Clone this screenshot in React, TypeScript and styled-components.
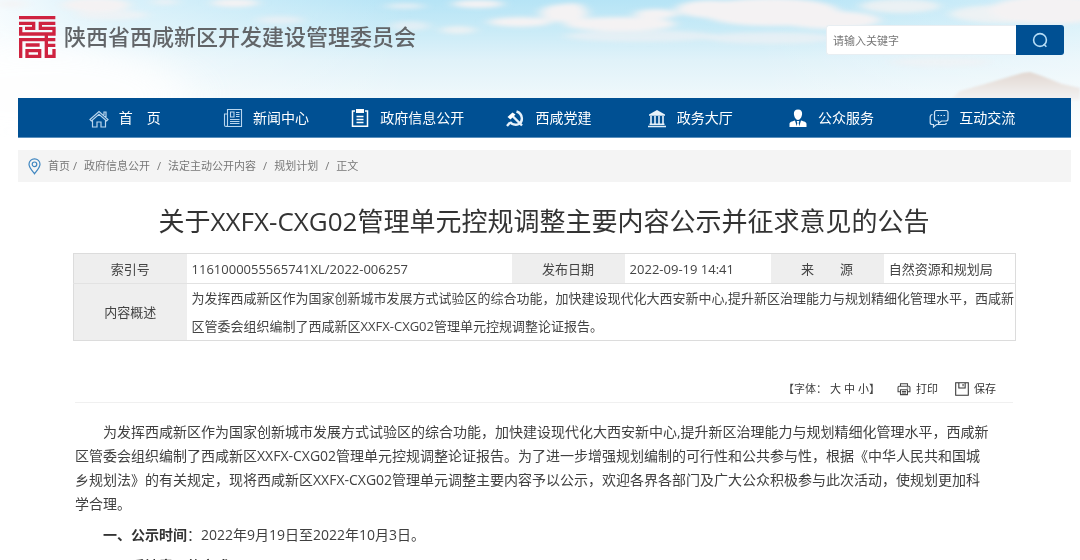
import React from 'react';
import styled, { createGlobalStyle } from 'styled-components';

const Global = createGlobalStyle`
  * { box-sizing: border-box; }
  body {
    margin: 0;
    background: #fff;
    color: #444;
    font-family: "Open Sans", "Noto Sans CJK SC", sans-serif;
  }
  a { color: inherit; text-decoration: none; }
  button { font-family: inherit; cursor: pointer; }
`;

const Page = styled.div`
  position: relative;
`;

const Sky = styled.svg`
  position: absolute;
  inset: 0 0 auto 0;
  width: 100%;
  height: 150px;
  z-index: -1;
`;

const Header = styled.header`
  display: flex;
  justify-content: space-between;
  align-items: flex-start;
  height: 98px;
  padding: 15px 16px 0 18px;
`;

const Brand = styled.a`
  display: flex;
  align-items: flex-start;
  gap: 8px;
`;

const BrandName = styled.span`
  padding-top: 5px;
  font-size: 22px;
  line-height: 32px;
  font-weight: 500;
  color: #626568;
`;

const Search = styled.form`
  display: flex;
  width: 238px;
  height: 30px;
  margin-top: 10px;
`;

const SearchInput = styled.input`
  flex: 1;
  min-width: 0;
  padding: 0 6px;
  border: 1px solid #e8eef2;
  border-right: 0;
  border-radius: 3px 0 0 3px;
  background: #fff;
  font-family: inherit;
  font-size: 11px;
  &::placeholder { color: #777; opacity: 1; }
`;

const SearchButton = styled.button`
  display: flex;
  align-items: center;
  justify-content: center;
  width: 48px;
  padding: 0;
  border: 0;
  border-radius: 0 3px 3px 0;
  background: #005093;
`;

const Nav = styled.nav`
  display: flex;
  height: 40px;
  margin: 0 9px 0 18px;
  padding: 0 28px 0 36px;
  background: #005093;
  border-bottom: 1px solid #5b90bd;
`;

const NavLink = styled.a`
  flex: 1;
  display: flex;
  align-items: center;
  justify-content: center;
  gap: 10px;
  color: #fff;
  font-size: 14px;
  line-height: 20px;
  white-space: nowrap;
`;

const Crumbs = styled.nav`
  display: flex;
  align-items: center;
  height: 32px;
  margin: 12px 9px 0 18px;
  padding: 0 10px;
  background: #f4f4f4;
  color: #777;
  font-size: 11px;
  line-height: 20px;
`;

const CrumbLink = styled.a`
  margin-left: 7px;
`;

const Slash = styled.span<{ $tight?: boolean }>`
  margin-left: ${(p) => (p.$tight ? 3 : 7)}px;
`;

const Article = styled.main`
  padding: 0 67px 0 75px;
`;

const Title = styled.h1`
  margin: 20px 0 13px;
  color: #333;
  font-size: 26px;
  line-height: 38px;
  font-weight: 400;
  text-align: center;
`;

const MetaWrap = styled.div`
  margin: 0 -3px 0 -2px;
`;

const Meta = styled.table`
  width: 100%;
  table-layout: fixed;
  border-collapse: collapse;
  border: 1px solid #dcdcdc;
  font-size: 13px;
  line-height: 28px;
  tr:first-child { height: 30px; }
  tr + tr { border-top: 1px solid #e2e2e2; }
`;

const Label = styled.th`
  padding: 0;
  background: #eee;
  font-weight: 400;
  text-align: center;
`;

const Value = styled.td`
  padding: 0 0 0 5px;
  white-space: nowrap;
`;

const Tools = styled.div`
  display: flex;
  justify-content: flex-end;
  align-items: center;
  height: 28px;
  margin-top: 34px;
  padding-right: 17px;
  border-bottom: 1px solid #f0f0f0;
  font-size: 11px;
  line-height: 20px;
`;

const Sizes = styled.div`
  display: flex;
  gap: 3px;
`;

const ToolButton = styled.button`
  display: flex;
  align-items: center;
  gap: 5px;
  margin-left: 17px;
  padding: 0;
  border: 0;
  background: none;
  color: #333;
  font-size: 11px;
  line-height: 20px;
`;

const SizeButton = styled(ToolButton)`
  margin-left: 0;
`;

const Body = styled.div`
  padding-top: 17px;
  color: #404040;
  font-size: 14px;
  line-height: 24px;
`;

const Para = styled.p`
  margin: 0 0 7px;
  text-indent: 28px;
  white-space: nowrap;
  strong { color: #333; }
`;

const Icon = ({ children, color = '#fff', size = 20, w = 1.3 }: { children: React.ReactNode; color?: string; size?: number; w?: number }) => (
  <svg width={size} height={size} viewBox="0 0 20 20" fill="none" stroke={color} strokeWidth={w} aria-hidden="true">
    {children}
  </svg>
);

const SealLogo = () => (
  <svg width="38" height="44" viewBox="-3 -3 114 132" fill="none" stroke="#cf2340" strokeWidth="10" aria-hidden="true">
    <path d="M0 5H109M0 22H44V37H18M5 33V54H105V37H64V22H109" />
    <path d="M5 126V71H109M20 87H62M24 104H62V121H24V99M82 54V121H105V99M82 88H109" />
  </svg>
);

const navItems: { text: string; icon: React.ReactNode }[] = [
  {
    text: '首　页',
    icon: <Icon color="#b9d6ee" w={1.2}><path d="M1 11.500 10 3.500l9 8-1.400 1.500L10 6.300 2.400 13zM3.500 12.500V19H8v-5h4v5h4.500v-6.500M15 7V4h2v5" /></Icon>,
  },
  {
    text: '新闻中心',
    icon: <Icon color="#b9d6ee" w={1.1}><path d="M4.500 1.500h14v17H3a1.500 1.500 0 0 1-1.500-1.500V6h3zM4.500 6v10.500a1.500 1.500 0 0 1-1.500 2M7.500 4h3.500v5H7.500zM13 4.500h3.500M13 6.500h3.500M13 8.500h3.500M7 11.500h9.500M7 13.500h9.500M7 15.500h9.500" /></Icon>,
  },
  {
    text: '政府信息公开',
    icon: <Icon w={1.5}><path d="M5 3H2.500v15.200h15V3H15M6.500 8.500h7M6.500 11.500h7M6.500 14.500h7" /><path d="M6 1h8v4H6z" fill="#fff" stroke="none" /></Icon>,
  },
  {
    text: '西咸党建',
    icon: (
      <Icon w={2.4} color="#e6f1fa">
        <path d="M11.500 3.500c6.500 2 7 10.500 2 12.700-3.500 1.300-7-.2-8.500-2.200M5 14.500l-3 3.500" />
        <path d="M7.500 8l9.500 9.500" />
        <path d="M2.500 9l5-4.500 3 2-5 5z" fill="#fff" stroke="none" />
      </Icon>
    ),
  },
  {
    text: '政务大厅',
    icon: (
      <Icon w={1.6} color="#e6f1fa">
        <path d="M10 2 18 6.500v1.300H2V6.500z" fill="#e8f3fb" stroke="none" />
        <path d="M4 8v8M8 8v8M12 8v8M16 8v8M2.500 16.200h15M1 18.500h18" />
      </Icon>
    ),
  },
  {
    text: '公众服务',
    icon: (
      <Icon>
        <g fill="#fff" stroke="none">
          <path d="M10 1.500c3 0 4.300 2 4.100 4.500-.2 2.800-1.900 6-4.100 6S6.100 8.800 5.900 6C5.700 3.500 7 1.500 10 1.500z" />
          <path d="M1.500 19v-3c0-2 2.500-2.600 5.500-3.500l2 6.500zM18.500 19v-3c0-2-2.500-2.600-5.500-3.500L11 19zM8.700 13h2.600l-.6 2 .7 4H8.600l.7-4z" />
        </g>
      </Icon>
    ),
  },
  {
    text: '互动交流',
    icon: (
      <Icon color="#cfe3f4" w={1.2}>
        <path d="M7.500 2.500H17a2 2 0 0 1 2 2V11a2 2 0 0 1-2 2h-4.500L9.500 15.500V13h-2a2 2 0 0 1-2-2V4.500a2 2 0 0 1 2-2zM3.500 6.500C2 6.700 1.200 7.500 1.200 9v5.500a2 2 0 0 0 2 2h1.300V19l3-2.500h8a2 2 0 0 0 2-1.500" />
        <path d="M8.500 7.500h1.500M11.500 7.500H13M14.500 7.500H16" />
      </Icon>
    ),
  },
];

const crumbs = ['首页', '政府信息公开', '法定主动公开内容', '规划计划', '正文'];

const SkyArt = () => (
  <Sky viewBox="0 0 1080 150" preserveAspectRatio="none" aria-hidden="true">
    <defs>
      <linearGradient id="sky" x1="0" y1="0" x2="0" y2="1">
        <stop offset="0" stopColor="#b6e4f6" />
        <stop offset="0.2" stopColor="#c9ebf7" />
        <stop offset="0.4" stopColor="#e0f2f9" />
        <stop offset="0.65" stopColor="#eff8fb" />
        <stop offset="1" stopColor="#ffffff" />
      </linearGradient>
      <linearGradient id="fade" x1="0" y1="0" x2="1" y2="0">
        <stop offset="0" stopColor="#fff" stopOpacity="0.85" />
        <stop offset="0.1" stopColor="#fff" stopOpacity="0.5" />
        <stop offset="0.38" stopColor="#fff" stopOpacity="0" />
        <stop offset="0.7" stopColor="#fff" stopOpacity="0" />
        <stop offset="1" stopColor="#fff" stopOpacity="0.4" />
      </linearGradient>
      <linearGradient id="hill" x1="0" y1="0" x2="0" y2="1">
        <stop offset="0" stopColor="#e2d8d2" />
        <stop offset="1" stopColor="#f3f3f3" />
      </linearGradient>
      <filter id="haze" x="-50%" y="-80%" width="200%" height="260%"><feGaussianBlur stdDeviation="24 14" /></filter>
      <filter id="soft" x="-10%" y="-50%" width="120%" height="200%"><feGaussianBlur stdDeviation="6 2" /></filter>
      <filter id="edge"><feGaussianBlur stdDeviation="1" /></filter>
    </defs>
    <rect width="1080" height="150" fill="url(#sky)" />
    <rect width="1080" height="150" fill="url(#fade)" />
    <ellipse cx="40" cy="95" rx="150" ry="50" fill="#fff" opacity="0.8" filter="url(#haze)" />
    <g fill="#f4f2f3" filter="url(#soft)">
      <ellipse cx="96" cy="5" rx="34" ry="7" />
      <ellipse cx="112" cy="15" rx="36" ry="5" opacity="0.7" />
      <ellipse cx="12" cy="4" rx="16" ry="4" opacity="0.7" />
      <ellipse cx="165" cy="2" rx="14" ry="3" opacity="0.7" />
      <ellipse cx="235" cy="3" rx="24" ry="4" />
      <ellipse cx="405" cy="6" rx="20" ry="3" opacity="0.7" />
      <ellipse cx="478" cy="4" rx="26" ry="4" />
      <ellipse cx="280" cy="20" rx="24" ry="4" opacity="0.6" />
      <ellipse cx="410" cy="26" rx="20" ry="5" opacity="0.6" />
      <ellipse cx="458" cy="30" rx="18" ry="4" opacity="0.8" />
      <ellipse cx="520" cy="22" rx="32" ry="5" />
      <ellipse cx="564" cy="13" rx="24" ry="9" />
      <ellipse cx="572" cy="7" rx="12" ry="4" />
      <ellipse cx="620" cy="24" rx="56" ry="7" />
      <ellipse cx="656" cy="14" rx="22" ry="5" />
      <ellipse cx="640" cy="36" rx="76" ry="6" opacity="0.6" />
      <ellipse cx="710" cy="9" rx="34" ry="9" />
      <ellipse cx="770" cy="12" rx="70" ry="14" />
      <ellipse cx="830" cy="20" rx="50" ry="9" />
      <ellipse cx="770" cy="38" rx="64" ry="6" opacity="0.6" />
      <ellipse cx="900" cy="6" rx="40" ry="7" opacity="0.8" />
      <ellipse cx="1000" cy="14" rx="50" ry="9" opacity="0.8" />
      <ellipse cx="1050" cy="10" rx="60" ry="14" />
      <ellipse cx="940" cy="62" rx="50" ry="5" opacity="0.5" />
    </g>
    <path d="M960 91 985 84 1005 78 1022 73 1030 72 1042 76 1062 84 1080 88V100H950z" fill="url(#hill)" filter="url(#edge)" />
    <rect x="0" y="137" width="1080" height="13" fill="#fff" />
  </Sky>
);

export default function App() {
  return (
    <Page>
      <Global />
      <SkyArt />
      <Header>
        <Brand href="#">
          <SealLogo />
          <BrandName>陕西省西咸新区开发建设管理委员会</BrandName>
        </Brand>
        <Search onSubmit={(e) => e.preventDefault()}>
          <SearchInput type="text" aria-label="搜索" placeholder="请输入关键字" />
          <SearchButton type="submit" aria-label="搜索">
            <Icon color="#b5dcf5" size={16} w={2}><circle cx="10" cy="10" r="8" /><path d="M14.500 15l3.500 3.500" /></Icon>
          </SearchButton>
        </Search>
      </Header>

      <Nav aria-label="主导航">
        {navItems.map((n) => (
          <NavLink href="#" key={n.text}>
            {n.icon}
            {n.text}
          </NavLink>
        ))}
      </Nav>

      <Crumbs aria-label="当前位置">
        <svg width="13" height="17" viewBox="0 0 13 17" fill="none" stroke="#3f86c0" strokeWidth="1.2" aria-hidden="true">
          <path d="M6.500 15.800C4 12.500 1 9.500 1 6.300a5.500 5.500 0 0 1 11 0c0 3.200-3 6.200-5.500 9.500z" />
          <circle cx="6.500" cy="6.300" r="2.300" />
        </svg>
        {crumbs.map((c, i) => (
          <React.Fragment key={c}>
            {i > 0 && <Slash $tight={i === 1}>/</Slash>}
            <CrumbLink href="#">{c}</CrumbLink>
          </React.Fragment>
        ))}
      </Crumbs>

      <Article>
        <Title>关于XXFX-CXG02管理单元控规调整主要内容公示并征求意见的公告</Title>
        <MetaWrap>
          <Meta>
            <colgroup>
              <col style={{ width: '12%' }} />
              <col />
              <col style={{ width: '12%' }} />
              <col style={{ width: '15.500%' }} />
              <col style={{ width: '12%' }} />
              <col style={{ width: '14%' }} />
            </colgroup>
            <tbody>
              <tr>
                <Label scope="row">索引号</Label>
                <Value>1161000055565741XL/2022-006257</Value>
                <Label scope="row">发布日期</Label>
                <Value>2022-09-19 14:41</Value>
                <Label scope="row">来　　源</Label>
                <Value>自然资源和规划局</Value>
              </tr>
              <tr>
                <Label scope="row">内容概述</Label>
                <Value colSpan={5}>
                  为发挥西咸新区作为国家创新城市发展方式试验区的综合功能，加快建设现代化大西安新中心,提升新区治理能力与规划精细化管理水平，西咸新
                  <br />
                  区管委会组织编制了西咸新区XXFX-CXG02管理单元控规调整论证报告。
                </Value>
              </tr>
            </tbody>
          </Meta>
        </MetaWrap>

        <Tools>
          <Sizes>
            <span>【字体：</span>
            <SizeButton type="button">大</SizeButton>
            <SizeButton type="button">中</SizeButton>
            <SizeButton type="button">小</SizeButton>
          </Sizes>
          <span>】</span>
          <ToolButton type="button">
            <Icon color="#444" size={14} w={1.5}><path d="M5 6V2.500h10V6M5 14H1.500V7.500q0-1.500 1.500-1.500h14q1.500 0 1.500 1.500V14H15M5 11h10v7H5zM7 13.500h6M7 15.800h6M14 8.500h2" /></Icon>
            打印
          </ToolButton>
          <ToolButton type="button">
            <Icon color="#333" size={14} w={1.5}><path d="M1 1h18v18H1zM5.500 1v7.500h9V1M11.500 3v3" /></Icon>
            保存
          </ToolButton>
        </Tools>

        <Body>
          <Para>
            为发挥西咸新区作为国家创新城市发展方式试验区的综合功能，加快建设现代化大西安新中心,提升新区治理能力与规划精细化管理水平，西咸新
            <br />
            区管委会组织编制了西咸新区XXFX-CXG02管理单元控规调整论证报告。为了进一步增强规划编制的可行性和公共参与性，根据《中华人民共和国城
            <br />
            乡规划法》的有关规定，现将西咸新区XXFX-CXG02管理单元调整主要内容予以公示，欢迎各界各部门及广大公众积极参与此次活动，使规划更加科
            <br />
            学合理。
          </Para>
          <Para><strong>一、公示时间</strong>：2022年9月19日至2022年10月3日。</Para>
          <Para><strong>二、反馈意见的方式</strong></Para>
        </Body>
      </Article>
    </Page>
  );
}
